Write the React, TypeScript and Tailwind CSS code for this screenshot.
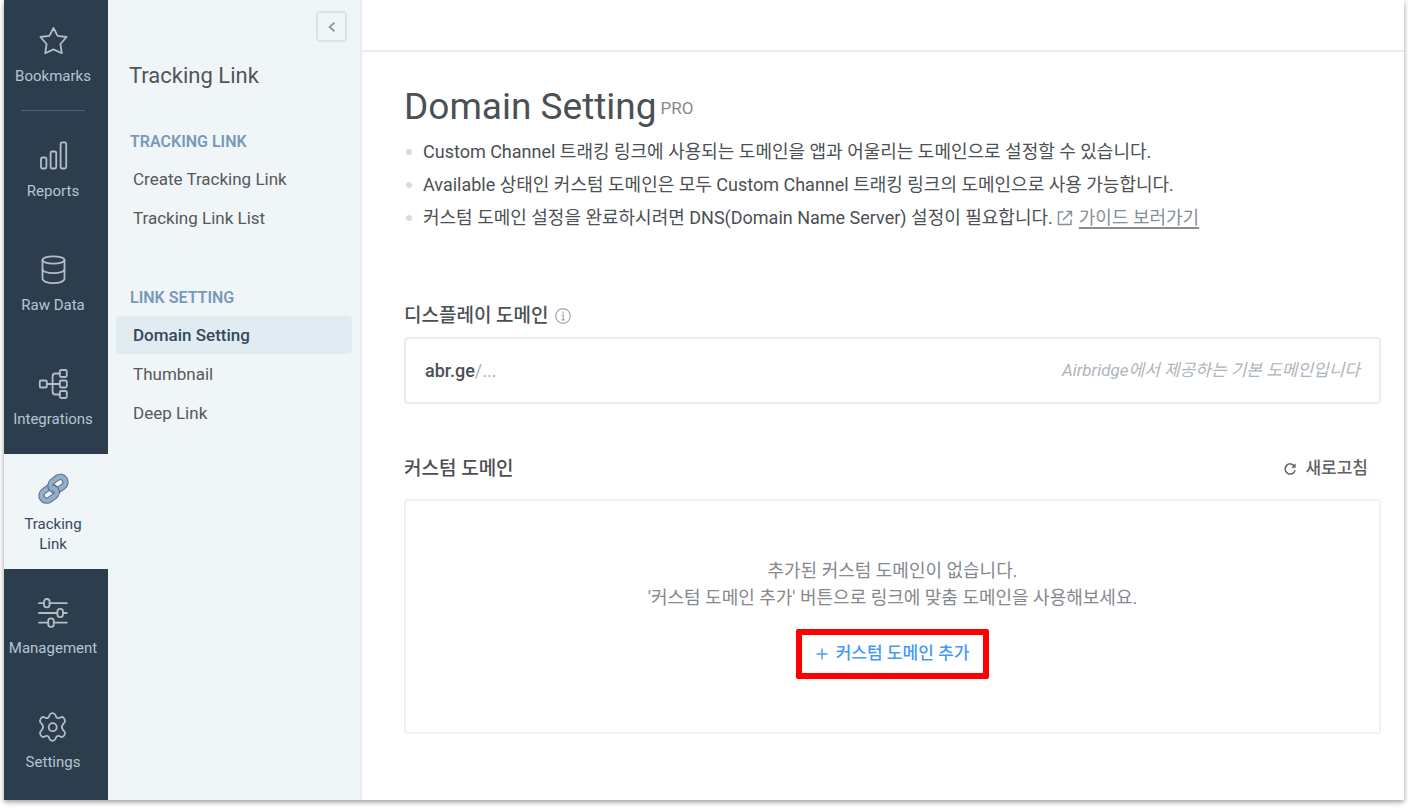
import type { ReactNode } from 'react'
import clsx from 'clsx'

interface RailItem {
  label: string
  icon: ReactNode
  active?: boolean
}

const stroke = {
  fill: 'none',
  stroke: 'currentColor',
  strokeWidth: 1.8,
  strokeLinecap: 'round',
  strokeLinejoin: 'round',
} as const

function StarIcon() {
  return (
    <svg viewBox="0 0 30 30" className="size-[30px]" {...stroke}>
      <path d="M15.5 2 19.6 9.8 28.6 11 22.4 18 23.8 27.2 15.5 23.4 7.2 27.2 8.6 18 2.4 11 11.4 9.8Z" />
    </svg>
  )
}

function BarsIcon() {
  return (
    <svg viewBox="0 0 30 30" className="size-[30px]" {...stroke}>
      <rect x="3" y="16.5" width="5.4" height="11" rx="1.5" />
      <rect x="12.6" y="10.5" width="5.6" height="17" rx="1.5" />
      <rect x="22.6" y="1.4" width="5.6" height="26.1" rx="1.5" />
    </svg>
  )
}

function DatabaseIcon() {
  return (
    <svg viewBox="0 0 30 30" className="size-[30px]" {...stroke}>
      <ellipse cx="15.5" cy="5" rx="11" ry="3.6" />
      <path d="M4.5 5V23.6C4.5 26.2 9 28.2 15.5 28.2S26.5 26.2 26.5 23.6V5" />
      <path d="M4.5 14.2C4.5 16.4 9 18.2 15.5 18.2S26.5 16.4 26.5 14.2" />
    </svg>
  )
}

function TreeIcon() {
  return (
    <svg viewBox="0 0 30 30" className="size-[30px]" {...stroke}>
      <rect x="1.8" y="11.5" width="7" height="7" rx="1" />
      <rect x="21.8" y="1" width="7" height="7" rx="1.5" />
      <rect x="21.8" y="11.5" width="7" height="7" rx="1.5" />
      <rect x="21.8" y="22" width="7" height="7" rx="1.5" />
      <path d="M8.8 15H21.8M21.8 4.5H17.4C15.6 4.5 14.6 5.5 14.6 7.3V22.5C14.6 24.5 15.6 25.5 17.4 25.5H21.8" />
    </svg>
  )
}

function ChainIcon() {
  return (
    <svg viewBox="0 0 30 30" className="size-[30px] overflow-visible" fill="none">
      <g transform="rotate(-36 11 19.8)">
        <rect x="3" y="14.6" width="16" height="10.4" rx="5.2" stroke="#5a6f82" strokeWidth="6.4" />
        <rect x="3" y="14.6" width="16" height="10.4" rx="5.2" stroke="#8fafcd" strokeWidth="4.4" />
      </g>
      <g transform="rotate(-36 20 9.8)">
        <rect x="12" y="4.6" width="16" height="10.4" rx="5.2" stroke="#5a6f82" strokeWidth="6.4" />
        <rect x="12" y="4.6" width="16" height="10.4" rx="5.2" stroke="#8fafcd" strokeWidth="4.4" />
      </g>
      <path d="M13.8 13.6C17 13.8 19.6 16 19 19.4" stroke="#5a6f82" strokeWidth="6" />
      <path d="M13 13.4C17 13.8 19.6 16 18.6 20.2" stroke="#8fafcd" strokeWidth="4.2" />
    </svg>
  )
}

function SlidersIcon() {
  return (
    <svg viewBox="0 0 30 30" className="size-[30px]" {...stroke}>
      <rect x="6" y="1" width="5.6" height="8.4" rx="2.6" />
      <rect x="19.4" y="10.8" width="5.6" height="8.4" rx="2.6" />
      <rect x="10.2" y="20.4" width="5.6" height="8.4" rx="2.6" />
      <path d="M1 5.2H6M11.6 5.2H28.8M1 15H19.4M25 15H28.8M1 24.6H10.2M15.8 24.6H28.8" />
    </svg>
  )
}

function GearIcon() {
  return (
    <svg viewBox="0 0 30 30" className="size-[30px]" {...stroke}>
      <circle cx="14.7" cy="15.2" r="4" />
      <path d="M11.5 3.2C12 1.9 12.6 1.2 14.5 1.2S17 1.9 17.5 3.2C18 5.6 19.6 6.6 21.6 5.8L23.4 5C24.8 4.8 25.5 5.4 26.4 6.9S27.4 9.4 26.5 10.5L25 12.2C23.6 13.9 23.6 16.1 25 17.8L26.5 19.5C27.4 20.6 27.3 21.6 26.4 23.1S24.8 25.2 23.4 25L21.6 24.2C19.6 23.4 18 24.4 17.5 26.8C17 28.1 16.4 28.8 14.5 28.8S12 28.1 11.5 26.8C11 24.4 9.4 23.4 7.4 24.2L5.6 25C4.2 25.2 3.5 24.6 2.6 23.1S1.6 20.6 2.5 19.5L4 17.8C5.4 16.1 5.4 13.9 4 12.2L2.5 10.5C1.6 9.4 1.7 8.4 2.6 6.9S4.2 4.8 5.6 5L7.4 5.8C9.4 6.6 11 5.6 11.5 3.2Z" />
    </svg>
  )
}

const railItems: RailItem[] = [
  { label: 'Reports', icon: <BarsIcon /> },
  { label: 'Raw Data', icon: <DatabaseIcon /> },
  { label: 'Integrations', icon: <TreeIcon /> },
  { label: 'Tracking Link', icon: <ChainIcon />, active: true },
  { label: 'Management', icon: <SlidersIcon /> },
  { label: 'Settings', icon: <GearIcon /> },
]

const menu = [
  { title: 'TRACKING LINK', links: ['Create Tracking Link', 'Tracking Link List'] },
  { title: 'LINK SETTING', links: ['Domain Setting', 'Thumbnail', 'Deep Link'] },
]

function RailLink({ item, className }: { item: RailItem; className: string }) {
  return (
    <a
      href="#"
      className={clsx(
        'flex flex-col items-center justify-center gap-2.5 pt-1 text-center text-[15px] leading-5',
        item.active ? 'bg-[#f0f5f8] pr-[22px] pl-4 text-[#34495c]' : 'pr-1.5 text-[#b4c5d3]',
        className,
      )}
    >
      <span className={item.active ? '' : 'text-[#b5bcc4]'}>{item.icon}</span>
      {item.label}
    </a>
  )
}

function Rail() {
  return (
    <nav className="w-[104px] shrink-0 bg-[#2c3e4e]">
      <RailLink item={{ label: 'Bookmarks', icon: <StarIcon /> }} className="h-[108px]" />
      <hr className="mt-0.5 mb-px ml-[17px] w-16 border-[#506373]" />
      {railItems.map((item) => (
        <RailLink key={item.label} item={item} className={item.active ? 'h-[115px]' : 'h-[114px]'} />
      ))}
    </nav>
  )
}

function SideMenu() {
  return (
    <aside className="w-[254px] shrink-0 border-r-2 border-[#e6ecf1] bg-[#f0f5f8] px-2">
      <div className="flex justify-end pt-[11px] pr-[5px]">
        <button
          type="button"
          aria-label="Collapse menu"
          className="flex size-[31px] items-center justify-center rounded border-2 border-[#dde3ea] text-[#8f979e]"
        >
          <svg viewBox="0 0 12 12" className="size-3" fill="none" stroke="currentColor" strokeWidth="1.8">
            <path d="M8.4 1.8 3.6 6 8.4 10.2" />
          </svg>
        </button>
      </div>
      <h2 className="mt-[18px] mb-10 pl-[13px] text-[22px] leading-8 text-[#505558]">Tracking Link</h2>
      {menu.map((group) => (
        <section key={group.title} className="mb-[51px]">
          <h3 className="mb-2 pl-[14px] text-base leading-5 font-semibold text-[#7899b9]">{group.title}</h3>
          <ul className="flex flex-col gap-px">
            {group.links.map((link) => (
              <li key={link}>
                <a
                  href="#"
                  className={clsx(
                    'block rounded px-[17px] text-[17px] leading-[38px]',
                    link === 'Domain Setting' ? 'bg-[#e1ebf2] font-medium text-[#34495c]' : 'text-[#55595c]',
                  )}
                >
                  {link}
                </a>
              </li>
            ))}
          </ul>
        </section>
      ))}
    </aside>
  )
}

function Bullet({ children }: { children: ReactNode }) {
  return (
    <li className="flex items-center gap-[11px]">
      <span className="ml-0.5 size-1.5 shrink-0 rounded-full bg-[#d3dde6]" />
      <span>{children}</span>
    </li>
  )
}

function Content() {
  return (
    <div className="min-w-0 flex-1">
      <header className="h-[52px] border-b-2 border-[#e9edf1]" />
      <main className="pt-7 pr-[23px] pl-[42px] text-[#4b5054]">
        <div className="flex items-center gap-1">
          <h1 className="text-[37px] leading-[54px]">Domain Setting</h1>
          <span className="pt-1 text-[17px] text-[#84898e]">PRO</span>
        </div>
        <ul className="mt-px text-lg leading-[33px]">
          <Bullet>Custom Channel 트래킹 링크에 사용되는 도메인을 앱과 어울리는 도메인으로 설정할 수 있습니다.</Bullet>
          <Bullet>Available 상태인 커스텀 도메인은 모두 Custom Channel 트래킹 링크의 도메인으로 사용 가능합니다.</Bullet>
          <Bullet>
            커스텀 도메인 설정을 완료하시려면 DNS(Domain Name Server) 설정이 필요합니다.
            <a href="#" className="text-[#868e95]">
              <svg
                viewBox="0 0 16 16"
                className="mr-1.5 ml-1 inline size-4 align-[-2px]"
                fill="none"
                stroke="currentColor"
                strokeWidth="1.4"
              >
                <path d="M6.5 2H1.5V14.5H14V9.5M9.5 1.5H14.5V6.5M14.2 1.8 6 10" />
              </svg>
              <span className="underline decoration-2 underline-offset-3">가이드 보러가기</span>
            </a>
          </Bullet>
        </ul>

        <section className="mt-[68px]">
          <h2 className="flex items-center gap-1.5 text-[19px] leading-7 font-medium">
            디스플레이 도메인
            <svg viewBox="0 0 16 16" className="size-4 text-[#a0a6ab]" fill="none" stroke="currentColor" strokeWidth="1.2">
              <circle cx="8" cy="8" r="7.3" />
              <path d="M8 3.8V5.4M6.6 7H8.2V11.6M6.4 11.8H9.8" />
            </svg>
          </h2>
          <div className="mt-[7px] flex h-[67px] items-center justify-between rounded border-2 border-[#e8eef3] px-[19px] text-lg">
            <p className="font-medium">
              abr.ge<span className="font-normal text-[#a9b1b8]">/...</span>
            </p>
            <p className="text-[17px] text-[#adb6be] italic">Airbridge에서 제공하는 기본 도메인입니다</p>
          </div>
        </section>

        <section className="mt-[51px]">
          <div className="flex items-center justify-between">
            <h2 className="text-[19px] leading-7 font-medium">커스텀 도메인</h2>
            <button type="button" className="flex items-center gap-2 pr-[13px] text-[17px] font-medium text-[#5d6266]">
              <svg viewBox="0 0 14 14" className="size-3.5" fill="none" stroke="currentColor" strokeWidth="1.5">
                <path d="M11.6 4.4A5.1 5.1 0 1 0 12.1 8.4" />
                <path d="M12.4 1.8V5.6H8.6Z" fill="currentColor" strokeWidth="0.4" />
              </svg>
              새로고침
            </button>
          </div>
          <div className="mt-4 flex h-[235px] flex-col items-center rounded border-2 border-[#eef2f6] pt-[56px] text-center text-[#84898e]">
            <p className="text-lg leading-[27px]">
              추가된 커스텀 도메인이 없습니다.
              <br />
              '커스텀 도메인 추가' 버튼으로 링크에 맞춤 도메인을 사용해보세요.
            </p>
            <button
              type="button"
              className="mt-[18px] flex h-[50px] items-center gap-2 rounded-xs border-[6px] border-[#fe0000] px-3.5 text-[17px] font-medium text-[#449af9]"
            >
              <svg viewBox="0 0 12 12" className="size-3" fill="none" stroke="currentColor" strokeWidth="1.4">
                <path d="M6 .5V11.5M.5 6H11.5" />
              </svg>
              커스텀 도메인 추가
            </button>
          </div>
        </section>
      </main>
    </div>
  )
}

export default function App() {
  return (
    <div className="flex min-h-screen bg-white px-1 pb-2 font-[Roboto,'Noto_Sans_CJK_KR',sans-serif]">
      <div className="flex flex-1 bg-white shadow-[0_2px_5px_rgba(0,0,0,0.4)]">
        <Rail />
        <SideMenu />
        <Content />
      </div>
    </div>
  )
}
